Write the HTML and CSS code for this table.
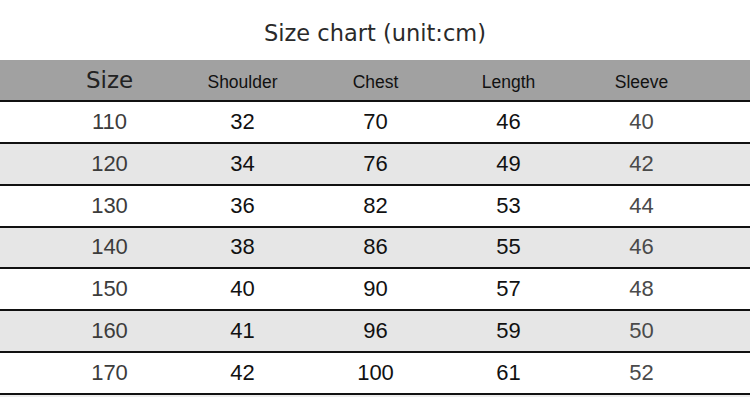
FILE: index.html
```html
<!DOCTYPE html>
<html lang="en">
<head>
<meta charset="utf-8">
<title>Size chart</title>
<link rel="stylesheet" href="styles.css">
</head>
<body>
<div class="page">
  <h1 class="title">Size chart (unit:cm)</h1>
  <div class="chart">
    <div class="row head">
      <div class="cell c-size">Size</div>
      <div class="cell">Shoulder</div>
      <div class="cell">Chest</div>
      <div class="cell">Length</div>
      <div class="cell">Sleeve</div>
    </div>
    <div class="row">
      <div class="cell c-size">110</div><div class="cell">32</div><div class="cell">70</div><div class="cell">46</div><div class="cell c-sleeve">40</div>
    </div>
    <div class="row alt">
      <div class="cell c-size">120</div><div class="cell">34</div><div class="cell">76</div><div class="cell">49</div><div class="cell c-sleeve">42</div>
    </div>
    <div class="row">
      <div class="cell c-size">130</div><div class="cell">36</div><div class="cell">82</div><div class="cell">53</div><div class="cell c-sleeve">44</div>
    </div>
    <div class="row alt">
      <div class="cell c-size">140</div><div class="cell">38</div><div class="cell">86</div><div class="cell">55</div><div class="cell c-sleeve">46</div>
    </div>
    <div class="row">
      <div class="cell c-size">150</div><div class="cell">40</div><div class="cell">90</div><div class="cell">57</div><div class="cell c-sleeve">48</div>
    </div>
    <div class="row alt">
      <div class="cell c-size">160</div><div class="cell">41</div><div class="cell">96</div><div class="cell">59</div><div class="cell c-sleeve">50</div>
    </div>
    <div class="row">
      <div class="cell c-size">170</div><div class="cell">42</div><div class="cell">100</div><div class="cell">61</div><div class="cell c-sleeve">52</div>
    </div>
  </div>
  <div class="shadow"></div>
</div>
</body>
</html>
```
FILE: styles.css
```css
html, body {
  margin: 0;
  padding: 0;
  background: #ffffff;
}
.page {
  width: 750px;
  height: 419px;
  font-family: "Liberation Sans", Arial, sans-serif;
  color: #111;
}
.title {
  margin: 0;
  height: 60px;
  display: flex;
  align-items: center;
  justify-content: center;
  padding-top: 6px;
  box-sizing: border-box;
  font-family: "DejaVu Sans", sans-serif;
  font-weight: normal;
  font-size: 22.5px;
  color: #2a2a2a;
}
.chart {
  display: flex;
  flex-direction: column;
}
.row {
  display: grid;
  grid-template-columns: 133px 133px 133px 133px 133px;
  padding-left: 43px;
  height: 39.85px;
  border-bottom: 2px solid #111;
  align-items: center;
  background: #ffffff;
}
.row.alt {
  background: #e6e6e6;
}
.row.head {
  height: 40px;
  background: #a1a1a1;
}
.cell {
  text-align: center;
  font-size: 22px;
  line-height: 1;
  color: #111;
}
.head .cell {
  font-size: 17.5px;
  padding-top: 6px;
}
.head .c-size {
  font-family: "DejaVu Sans", sans-serif;
  font-size: 23px;
  padding-top: 0;
  color: #222;
}
.c-size {
  color: #3c3c3c;
}
.c-sleeve {
  color: #4a4a4a;
}
.shadow {
  height: 2px;
  background: #ececec;
}
```
